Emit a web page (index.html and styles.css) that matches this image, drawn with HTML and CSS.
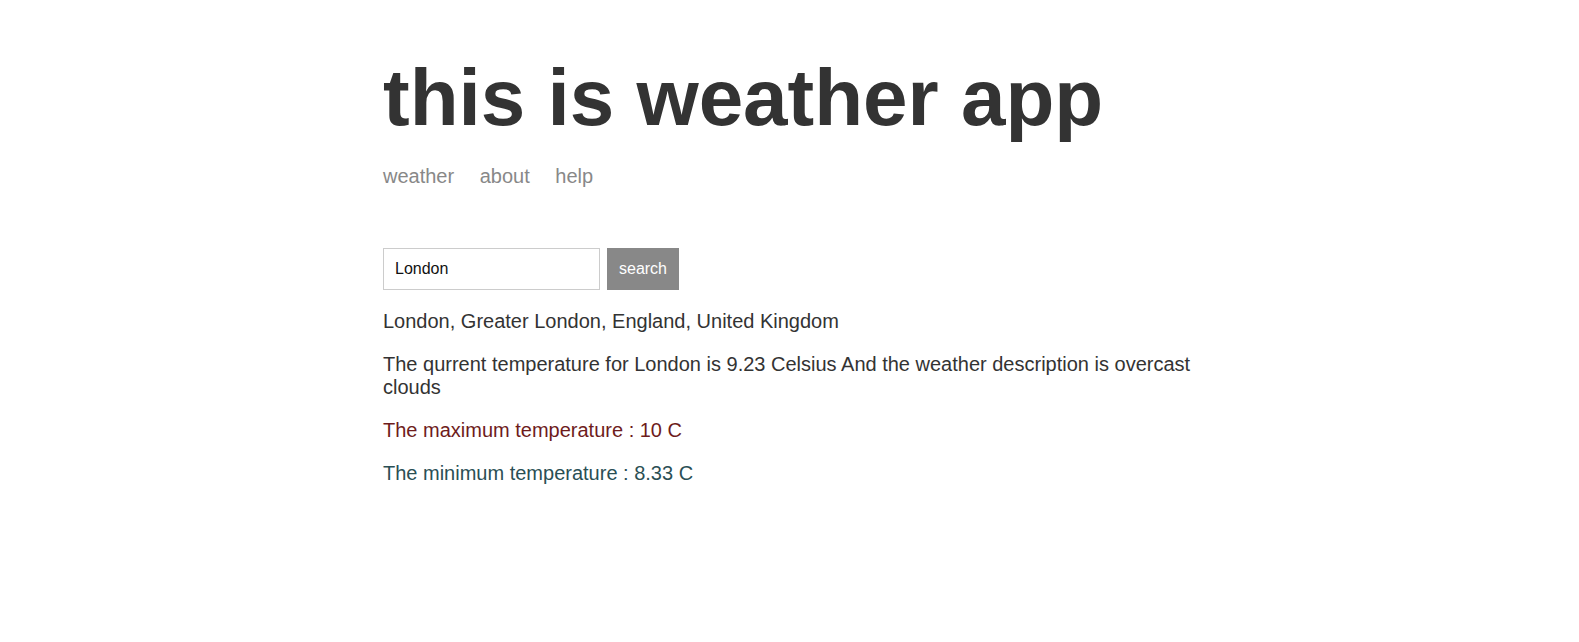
FILE: index.html
```html
<!DOCTYPE html>
<html lang="en">
<head>
<meta charset="utf-8">
<title>Weather</title>
<link rel="stylesheet" href="styles.css">
</head>
<body>
<div class="main-content">
  <header class="header">
    <h1 class="title">this is weather app</h1>
    <nav class="nav">
      <a class="nav-link" href="#">weather</a>
      <a class="nav-link" href="#">about</a>
      <a class="nav-link" href="#">help</a>
    </nav>
  </header>
  <form class="search-form">
    <input class="search-input" type="text" value="London">
    <button class="search-btn" type="button">search</button>
  </form>
  <p class="msg">London, Greater London, England, United Kingdom</p>
  <p class="msg">The qurrent temperature for London is 9.23 Celsius And the weather description is overcast clouds</p>
  <p class="msg msg-max">The maximum temperature : 10 C</p>
  <p class="msg msg-min">The minimum temperature : 8.33 C</p>
</div>
</body>
</html>
```
FILE: styles.css
```css
html, body {
  margin: 0;
  padding: 0;
  background: #ffffff;
}

body {
  font-family: "Liberation Sans", Arial, sans-serif;
  color: #333333;
}

.main-content {
  width: 813px;
  margin: 0 auto;
  padding-top: 52px;
}

.title {
  font-size: 80px;
  font-weight: bold;
  line-height: 92px;
  margin: 0 0 21px;
  color: #333333;
}

.nav {
  font-size: 20px;
  line-height: 23px;
}

.nav-link {
  color: #888888;
  text-decoration: none;
  margin-right: 20px;
}

.search-form {
  display: flex;
  gap: 7px;
  margin-top: 60px;
}

.search-input {
  box-sizing: border-box;
  width: 217px;
  height: 42px;
  border: 1px solid #cccccc;
  padding: 0 11px;
  font-family: "Liberation Sans", Arial, sans-serif;
  font-size: 16px;
  color: #111111;
  outline: none;
}

.search-btn {
  box-sizing: border-box;
  width: 72px;
  height: 42px;
  border: none;
  background: #888888;
  color: #ffffff;
  font-family: "Liberation Sans", Arial, sans-serif;
  font-size: 16px;
  padding: 0;
  cursor: pointer;
}

.msg {
  font-size: 20px;
  line-height: 23px;
  margin: 20px 0;
}

.msg-max {
  color: #6e1c1c;
}

.msg-min {
  color: #2a4f55;
}
```
